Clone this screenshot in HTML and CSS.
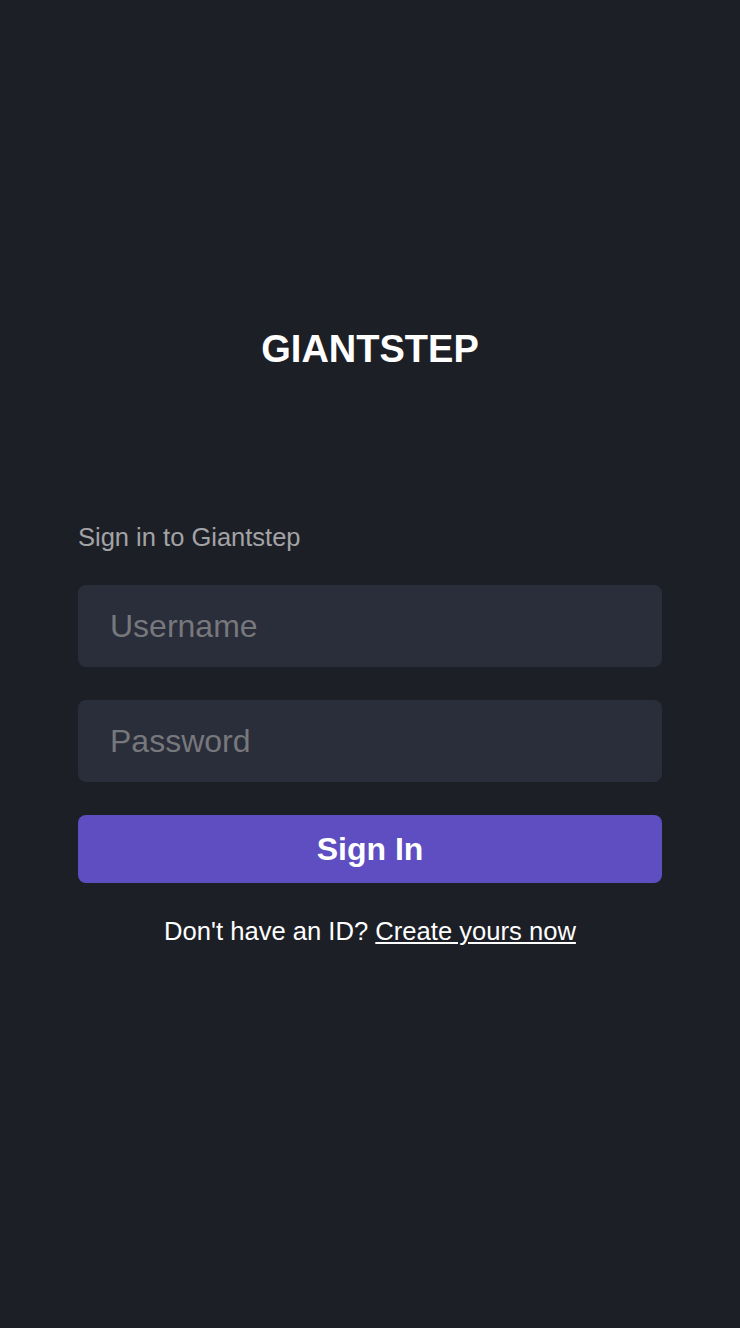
FILE: index.html
```html
<!DOCTYPE html>
<html lang="en">
<head>
<meta charset="utf-8">
<title>Giantstep</title>
<link rel="stylesheet" href="styles.css">
</head>
<body>
<main class="page">
  <h1 class="logo">GIANTSTEP</h1>
  <form class="form">
    <p class="form-title">Sign in to Giantstep</p>
    <input class="field" type="text" placeholder="Username">
    <input class="field" type="password" placeholder="Password">
    <button class="submit" type="button">Sign In</button>
    <p class="signup">Don't have an ID? <a href="#" class="signup-link">Create yours now</a></p>
  </form>
</main>
</body>
</html>
```

FILE: styles.css
```css
html, body {
  margin: 0;
  padding: 0;
  background: #1d1f27;
  height: 100%;
}
body {
  font-family: "Liberation Sans", Arial, Helvetica, sans-serif;
  color: #ffffff;
}
.page {
  display: flex;
  flex-direction: column;
  align-items: center;
  padding-top: 326px;
}
.logo {
  margin: 0;
  font-size: 38px;
  font-weight: 700;
  line-height: 46px;
  color: #ffffff;
}
.form {
  width: 584px;
  display: flex;
  flex-direction: column;
  margin-top: 150px;
}
.form-title {
  margin: 0 0 33px;
  font-size: 25.5px;
  line-height: 30px;
  color: #a3a3a6;
}
.field {
  box-sizing: border-box;
  height: 82px;
  border: none;
  outline: none;
  border-radius: 8px;
  background: #2a2d3a;
  padding: 0 32px;
  font-family: inherit;
  font-size: 32px;
  color: #ffffff;
  margin-bottom: 33px;
}
.field::placeholder {
  color: #77787c;
}
.submit {
  height: 68px;
  border: none;
  border-radius: 8px;
  background: #5e4ec1;
  color: #ffffff;
  font-family: inherit;
  font-size: 32px;
  font-weight: 700;
  cursor: pointer;
}
.signup {
  margin: 33px 0 0;
  text-align: center;
  font-size: 25.6px;
  line-height: 30px;
  color: #ffffff;
}
.signup-link {
  color: #ffffff;
  text-decoration: underline;
}
```
